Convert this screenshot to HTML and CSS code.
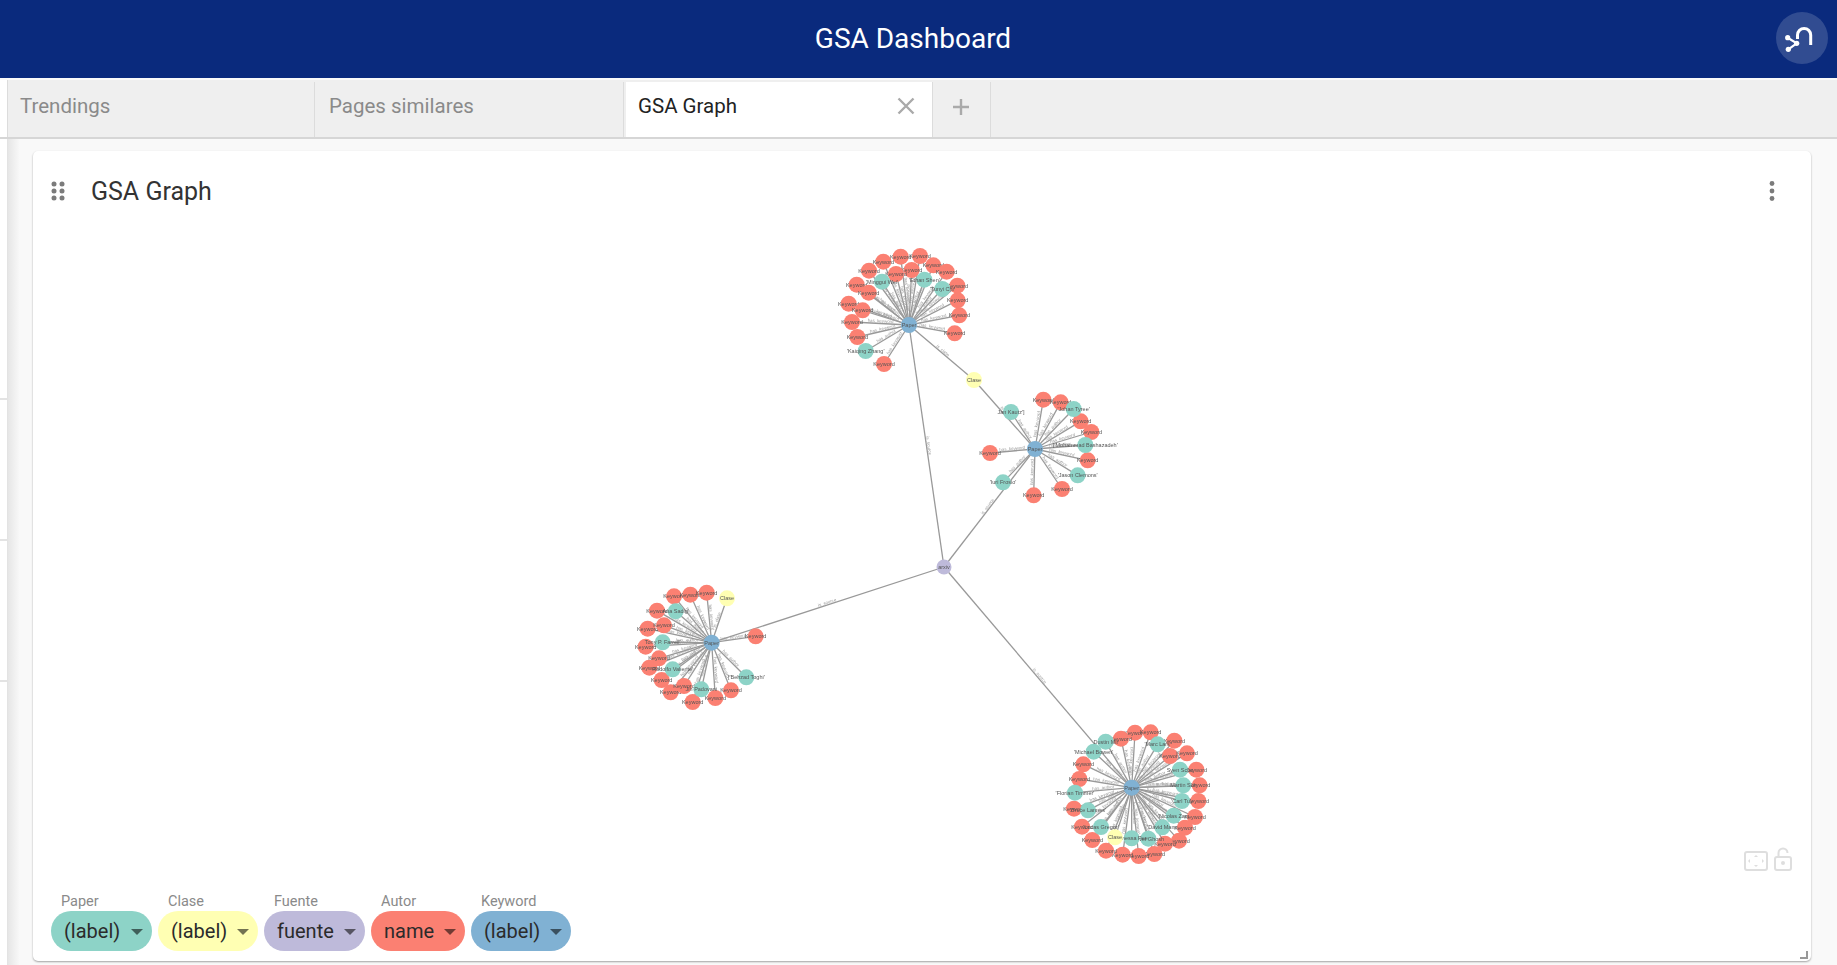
FILE: index.html
```html
<!DOCTYPE html>
<html lang="en">
<head>
    <meta charset="UTF-8">
    <meta name="viewport" content="width=device-width, initial-scale=1.0">
    <title>GSA Dashboard</title>
    <link rel="stylesheet" href="styles.css">
</head>
<body>
    <header class="topbar">
        <h1>GSA Dashboard</h1>
        <button class="topbar-btn" aria-label="Graph">
            <svg viewBox="0 0 52 52" width="52" height="52">
                <path d="M21.5 27V23a6.6 6.6 0 0 1 13.2 0V33" fill="none" stroke="#fff" stroke-width="3"/>
                <path d="M11.7 25.7L20.7 31.3L12.3 37.3" fill="none" stroke="#fff" stroke-width="2.2"/>
                <circle cx="11.7" cy="25.7" r="2.6" fill="#fff"/>
                <circle cx="12.3" cy="37.3" r="2.6" fill="#fff"/>
                <circle cx="20.7" cy="31.3" r="2.6" fill="#fff"/>
            </svg>
        </button>
    </header>

    <nav class="tabs">
        <div class="tab">Trendings</div>
        <div class="tab">Pages similares</div>
        <div class="tab active">
            <span>GSA Graph</span>
            <svg class="tab-close" viewBox="0 0 18 18" width="18" height="18"><path d="M1.5 1.5L16.5 16.5M16.5 1.5L1.5 16.5"/></svg>
        </div>
        <div class="tab-add">
            <svg viewBox="0 0 18 18" width="18" height="18"><path d="M9 1V17M1 9H17"/></svg>
        </div>
    </nav>

    <div class="workspace">
        <aside class="rail">
            <div class="rail-row rail-row-first"></div>
            <div class="rail-row"></div>
            <div class="rail-row"></div>
        </aside>

        <main class="content">
            <section class="card">
                <div class="card-header">
                    <svg class="drag-handle" viewBox="0 0 14 20" width="14" height="20">
                        <circle cx="3" cy="3" r="2.5"/><circle cx="11" cy="3" r="2.5"/>
                        <circle cx="3" cy="10" r="2.5"/><circle cx="11" cy="10" r="2.5"/>
                        <circle cx="3" cy="17" r="2.5"/><circle cx="11" cy="17" r="2.5"/>
                    </svg>
                    <h2>GSA Graph</h2>
                    <svg class="kebab" viewBox="0 0 6 20" width="6" height="20">
                        <circle cx="3" cy="2.5" r="2.4"/><circle cx="3" cy="10" r="2.4"/><circle cx="3" cy="17.5" r="2.4"/>
                    </svg>
                </div>

                <div class="graph-area">
                    <svg id="graph" class="graph" viewBox="33 223 1778 738"></svg>

                    <div class="canvas-tools">
                        <svg viewBox="0 0 24 20" width="24" height="20">
                            <rect x="1" y="1" width="22" height="18" rx="2" fill="none" stroke-width="2"/>
                            <path class="fill" d="M12 4l2 2h-4zM12 16l2-2h-4zM4 10l2-2v4zM20 10l-2-2v4z"/>
                        </svg>
                        <svg viewBox="0 0 20 24" width="20" height="24">
                            <rect x="2" y="10" width="16" height="13" rx="2" fill="none" stroke-width="2"/>
                            <path d="M5.5 10V6a4.5 4.5 0 0 1 9 0" fill="none" stroke-width="2"/>
                            <circle class="fill" cx="10" cy="16" r="2"/>
                        </svg>
                    </div>

                    <div class="legend">
                        <div class="legend-item">
                            <label>Paper</label>
                            <div class="pill pill-paper">(label)<i class="caret"></i></div>
                        </div>
                        <div class="legend-item">
                            <label>Clase</label>
                            <div class="pill pill-clase">(label)<i class="caret"></i></div>
                        </div>
                        <div class="legend-item">
                            <label>Fuente</label>
                            <div class="pill pill-fuente">fuente<i class="caret"></i></div>
                        </div>
                        <div class="legend-item">
                            <label>Autor</label>
                            <div class="pill pill-autor">name<i class="caret"></i></div>
                        </div>
                        <div class="legend-item">
                            <label>Keyword</label>
                            <div class="pill pill-keyword">(label)<i class="caret"></i></div>
                        </div>
                    </div>

                    <svg class="resize-handle" viewBox="0 0 8 8" width="8" height="8"><path d="M7 0V7H0"/></svg>
                </div>
            </section>
        </main>
    </div>

    <script src="graph.js"></script>
</body>
</html>
```

FILE: styles.css
```css
* {
    box-sizing: border-box;
}
html, body {
    height: 100%;
}
body {
    margin: 0;
    display: flex;
    flex-direction: column;
    overflow: hidden;
    font-family: Roboto, 'Liberation Sans', sans-serif;
    background: #fff;
    color: #333;
}
.topbar {
    flex: 0 0 78px;
    display: flex;
    align-items: center;
    justify-content: center;
    padding: 0 11px 2px 0;
    background: #0a2a7d;
    color: #fff;
    position: relative;
}
.topbar h1 {
    margin: 0;
    font-size: 28px;
    font-weight: 400;
}
.topbar-btn {
    position: absolute;
    right: 9px;
    top: 12px;
    width: 52px;
    height: 52px;
    padding: 0;
    border: none;
    border-radius: 50%;
    background: rgba(255, 255, 255, 0.16);
}
.topbar-btn svg {
    display: block;
}
.tabs {
    flex: 0 0 61px;
    display: flex;
    padding: 2px 0 0 8px;
    background: linear-gradient(90deg, #fff 7px, #dcdcdc 7px, #dcdcdc 8px, #efefef 8px);
    border-bottom: 2px solid #d6d6d6;
    border-top: 2px solid #fafafa;
}
.tab {
    width: 306px;
    margin-right: 3px;
    padding: 0 17px 8px 12px;
    display: flex;
    align-items: center;
    justify-content: space-between;
    font-size: 20.5px;
    color: #8a8a8a;
    box-shadow: 1px 0 0 #dcdcdc;
}
.tab.active {
    background: #fff;
    color: #222;
}
.tab-close path {
    stroke: #aaa;
    stroke-width: 2.4;
}
.tab-add {
    width: 55px;
    padding: 0 3px 6px 0;
    display: flex;
    align-items: center;
    justify-content: center;
    box-shadow: 1px 0 0 #dcdcdc;
}
.tab-add path {
    stroke: #aaa;
    stroke-width: 2.4;
}
.workspace {
    flex: 1;
    display: flex;
    min-height: 0;
}
.rail {
    flex: 0 0 7px;
}
.rail-row {
    height: 141px;
    border-bottom: 2px solid #e3e3e3;
}
.rail-row-first {
    height: 261px;
}
.content {
    flex: 1;
    display: flex;
    min-height: 0;
    padding: 12px 26px 4px 25px;
    background: linear-gradient(90deg, #e6e6e6, #f9f9f9 12px);
    border-left: 1px solid #e3e3e3;
}
.card {
    flex: 1;
    display: flex;
    flex-direction: column;
    background: #fff;
    border-radius: 5px;
    box-shadow: 0 1px 2px rgba(0, 0, 0, 0.35);
}
.card-header {
    flex: 0 0 72px;
    display: flex;
    align-items: center;
    padding: 14px 36px 6px 18px;
}
.card-header h2 {
    flex: 1;
    margin: 0 0 0 26px;
    font-size: 25px;
    font-weight: 400;
    color: #333;
}
.drag-handle, .kebab {
    fill: #7b7b7b;
}
.graph-area {
    flex: 1;
    position: relative;
    min-height: 0;
}
.graph {
    display: block;
    width: 100%;
    height: 100%;
    filter: blur(0.7px);
    font-family: 'Liberation Sans', sans-serif;
}
.graph line {
    stroke: #999;
    stroke-width: 1.3;
}
.graph .node-label {
    font-size: 5.5px;
    fill: #555;
    text-anchor: middle;
}
.graph .edge-label {
    font-size: 4.4px;
    fill: #999;
    text-anchor: middle;
}
.canvas-tools {
    position: absolute;
    right: 18px;
    bottom: 90px;
    display: flex;
    align-items: flex-end;
    gap: 5px;
    stroke: #dedede;
}
.canvas-tools .fill {
    fill: #dedede;
    stroke: none;
}
.legend {
    position: absolute;
    left: 18px;
    bottom: 10px;
    display: flex;
    gap: 6.5px;
}
.legend-item label {
    display: block;
    margin: 0 0 1px 10px;
    font-size: 14.5px;
    line-height: 17px;
    color: #8a8a8a;
}
.pill {
    height: 40px;
    display: flex;
    align-items: center;
    justify-content: space-between;
    padding: 0 9px 0 13px;
    border-radius: 20px;
    font-size: 20px;
    color: #2b2b2b;
}
.pill-paper { background: #8dd3c7; width: 100.5px; }
.pill-clase { background: #ffffb3; width: 99.5px; }
.pill-fuente { background: #bebada; width: 100.5px; }
.pill-autor { background: #fb8072; width: 93.5px; }
.pill-keyword { background: #80b1d3; width: 100px; }
.caret {
    width: 0;
    height: 0;
    border-left: 6px solid transparent;
    border-right: 6px solid transparent;
    border-top: 6px solid rgba(0, 0, 0, 0.55);
    margin-top: 2px;
}
.resize-handle {
    position: absolute;
    right: 3px;
    bottom: 2px;
    fill: none;
    stroke: #999;
    stroke-width: 2;
}
```

FILE: graph.js
```js
const NS = 'http://www.w3.org/2000/svg';
const graph = document.getElementById('graph');
const COLORS = { paper: '#80b1d3', keyword: '#fb8072', autor: '#8dd3c7', clase: '#ffffb3', fuente: '#bebada' };

// positions were traced at 3x, so each group has an origin and coords are divided by 3
const clusters = [
    {
        ox: 820, oy: 230, hub: [267, 285],
        keywords: [[242,80],[300,78],[190,95],[147,122],[340,106],[380,125],[275,120],[228,132],[110,164],[146,188],[412,167],[413,211],[86,221],[128,241],[418,256],[96,276],[112,321],[404,310],[192,402]],
        authors: [[186,155,"'Minggui Wei'"],[313,149,"'Ethan Shen'"],[367,177,"'Tunyi Chi'"],[137,363,"'Kaiqing Zhang'"]],
        clases: []
    },
    {
        ox: 820, oy: 230, hub: [645, 657],
        keywords: [[670,509],[722,517],[782,574],[814,606],[510,669],[803,691],[726,777],[641,796]],
        authors: [[761,537,"'Johan Tyree'"],[796,645,"['Mohammad Bashazadeh'"],[773,736,"'Jason Clemons'"],[549,757,"'Iuri Frosio'"],[573,546,"Jan Kautz']"]],
        clases: []
    },
    {
        ox: 620, oy: 570, hub: [275, 218],
        keywords: [[162,79],[211,74],[260,68],[111,122],[83,176],[132,166],[77,230],[117,265],[88,293],[125,330],[152,367],[192,348],[218,396],[286,384],[333,361],[407,199]],
        authors: [[167,124,"Ana Sadig'"],[128,217,"Tony P. Farrell'"],[158,298,"Rodolfo Valiente'"],[244,358,"Jin Padovani"],[379,322,"['Behzad Toghi'"]],
        clases: [[321,85]]
    },
    {
        ox: 1050, oy: 710, hub: [245, 233],
        keywords: [[255,68],[302,67],[213,86],[373,92],[360,138],[411,130],[100,163],[88,207],[439,179],[449,226],[445,273],[435,321],[405,353],[387,392],[345,401],[313,432],[266,438],[218,434],[168,422],[127,390],[96,350],[72,296]],
        authors: [[167,95,"Dustin Mil"],[131,125,"'Michael Bowen'"],[323,103,"'Marc Lars'"],[390,179,"Sven Scho"],[400,226,"Martin Sch"],[396,273,"'Carl Tuy"],[371,317,"'Nicolas Zam"],[337,352,"'David Mann"],[295,386,"Pavel Ghosh"],[245,385,"Vanessa Pee"],[153,351,"'Lucas Gregor'"],[114,301,"'Bruce Lannes'"],[75,248,"'Florian Timmer'"]],
        clases: [[195,382]]
    }
];

function el(name, attrs, text) {
    const node = document.createElementNS(NS, name);
    for (const key in attrs) node.setAttribute(key, attrs[key]);
    if (text) node.textContent = text;
    return node;
}

const edges = el('g', {});
const nodes = el('g', {});
graph.appendChild(edges);
graph.appendChild(nodes);

function addEdge(x1, y1, x2, y2, label) {
    edges.appendChild(el('line', { x1, y1, x2, y2 }));
    let angle = Math.atan2(y2 - y1, x2 - x1) * 180 / Math.PI;
    if (angle > 90 || angle < -90) angle += 180;
    const mx = (x1 + x2) / 2, my = (y1 + y2) / 2;
    edges.appendChild(el('text', {
        class: 'edge-label',
        transform: `translate(${mx} ${my}) rotate(${angle}) translate(0 -1)`
    }, label));
}

function addNode(x, y, r, color, label) {
    nodes.appendChild(el('circle', { cx: x, cy: y, r, fill: color }));
    nodes.appendChild(el('text', { class: 'node-label', x, y: y + 2 }, label));
}

const hubs = clusters.map(c => [c.ox + c.hub[0] / 3, c.oy + c.hub[1] / 3]);
const fuente = [944, 567];
const clase = [974, 380];

// links between the groups
addEdge(hubs[0][0], hubs[0][1], clase[0], clase[1], 'is_clase');
addEdge(hubs[1][0], hubs[1][1], clase[0], clase[1], 'is_clase');
hubs.forEach(h => addEdge(h[0], h[1], fuente[0], fuente[1], 'is_source'));

clusters.forEach((c, i) => {
    const [hx, hy] = hubs[i];
    const at = p => [c.ox + p[0] / 3, c.oy + p[1] / 3];
    c.keywords.forEach(p => {
        const [x, y] = at(p);
        addEdge(hx, hy, x, y, 'has_keyword');
        addNode(x, y, 8, COLORS.keyword, 'Keyword');
    });
    c.authors.forEach(p => {
        const [x, y] = at(p);
        addEdge(hx, hy, x, y, 'has_author');
        addNode(x, y, 8, COLORS.autor, p[2]);
    });
    c.clases.forEach(p => {
        const [x, y] = at(p);
        addEdge(hx, hy, x, y, 'is_clase');
        addNode(x, y, 8, COLORS.clase, 'Clase');
    });
});

hubs.forEach(h => addNode(h[0], h[1], 8, COLORS.paper, 'Paper'));
addNode(clase[0], clase[1], 8, COLORS.clase, 'Clase');
addNode(fuente[0], fuente[1], 7.5, COLORS.fuente, 'arxiv');
```
